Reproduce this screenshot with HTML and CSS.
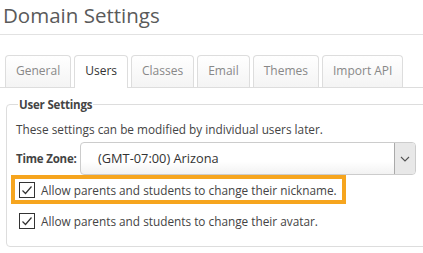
FILE: index.html
```html
<!DOCTYPE html>
<html lang="en">
<head>
  <meta charset="UTF-8" />
  <title>Domain Settings</title>
  <link rel="stylesheet" href="styles.css">
</head>
<body>
  <div class="page">
    <h1 class="title">Domain Settings</h1>

    <ul class="tabs">
      <li>General</li>
      <li class="active">Users</li>
      <li>Classes</li>
      <li>Email</li>
      <li>Themes</li>
      <li>Import API</li>
    </ul>

    <fieldset class="group">
      <legend>User Settings</legend>
      <p class="note">These settings can be modified by individual users later.</p>

      <div class="field">
        <label>Time Zone:</label>
        <div class="select">
          <span class="value">(GMT-07:00) Arizona</span>
          <span class="arrow">
            <svg width="10" height="6" viewBox="0 0 10 6"><path d="M1 1 L5 5 L9 1" fill="none" stroke="#555" stroke-width="1.1"/></svg>
          </span>
        </div>
      </div>

      <div class="check highlight">
        <span class="box"><svg width="14" height="14" viewBox="0 0 14 14"><path d="M2.5 7.5 L5.5 10.5 L11.5 3.5" fill="none" stroke="#333" stroke-width="1.2"/></svg></span>
        <span>Allow parents and students to change their nickname.</span>
      </div>
      <div class="check">
        <span class="box"><svg width="14" height="14" viewBox="0 0 14 14"><path d="M2.5 7.5 L5.5 10.5 L11.5 3.5" fill="none" stroke="#333" stroke-width="1.2"/></svg></span>
        <span>Allow parents and students to change their avatar.</span>
      </div>
    </fieldset>
  </div>
</body>
</html>
```

FILE: styles.css
```css
* {
  box-sizing: border-box;
}
body {
  margin: 0;
  font-family: 'Open Sans', sans-serif;
  color: #444;
  background: #fff;
  overflow: hidden;
}
.page {
  width: 440px;
}
.title {
  font-size: 20.5px;
  font-weight: normal;
  color: #5a5a5a;
  margin: 0;
  padding: 0 0 4px 3px;
  line-height: 30px;
  border-bottom: 1px solid #e2e2e2;
}
.tabs {
  list-style: none;
  margin: 20px 0 0;
  padding: 0 0 0 5px;
  display: flex;
  gap: 3px;
  border-bottom: 1px solid #ddd;
}
.tabs li {
  height: 32px;
  line-height: 30px;
  padding: 0 10px;
  font-size: 12px;
  color: #888;
  border: 1px solid #ddd;
  border-bottom: none;
  border-radius: 4px 4px 0 0;
  background: linear-gradient(#fff, #f4f4f4);
  margin-bottom: -1px;
}
.tabs li.active {
  color: #333;
  background: #fff;
  height: 33px;
}
.group {
  margin: 9px 0 0 6px;
  padding: 0 0 11px 9px;
  border: 1px solid #ddd;
  border-radius: 4px;
}
.group legend {
  font-size: 11.5px;
  font-weight: bold;
  letter-spacing: -0.2px;
  color: #444;
  margin-left: 2px;
  padding: 0 1px;
}
.note {
  font-size: 11.8px;
  margin: 8px 0 0 0;
  line-height: 18px;
}
.field {
  display: flex;
  align-items: center;
  margin-top: 4px;
}
.field label {
  font-size: 11.5px;
  font-weight: bold;
  letter-spacing: -0.2px;
  width: 64px;
  white-space: nowrap;
}
.select {
  display: flex;
  align-items: stretch;
  width: 336px;
  height: 33px;
  border: 1px solid #ccc;
  border-radius: 4px;
  background: linear-gradient(#fff 60%, #f2f2f2);
  overflow: hidden;
}
.select .value {
  flex: 1;
  font-size: 12.8px;
  color: #333;
  line-height: 31px;
  padding-left: 17px;
}
.select .arrow {
  width: 21px;
  background: #e8e8e8;
  border-left: 1px solid #aaa;
  display: flex;
  align-items: center;
  justify-content: center;
}
.check {
  display: flex;
  align-items: center;
  gap: 6px;
  font-size: 11.8px;
  color: #444;
  margin-left: -5px;
  width: 335px;
  height: 29px;
  padding-left: 8px;
  white-space: nowrap;
}
.check.highlight {
  border: 4px solid #f6a51e;
  padding-left: 4px;
}
.check + .check {
  margin-top: 2px;
}
.box {
  flex: none;
  width: 16px;
  height: 16px;
  border: 1.5px solid #333;
  display: flex;
  align-items: center;
  justify-content: center;
}
```
